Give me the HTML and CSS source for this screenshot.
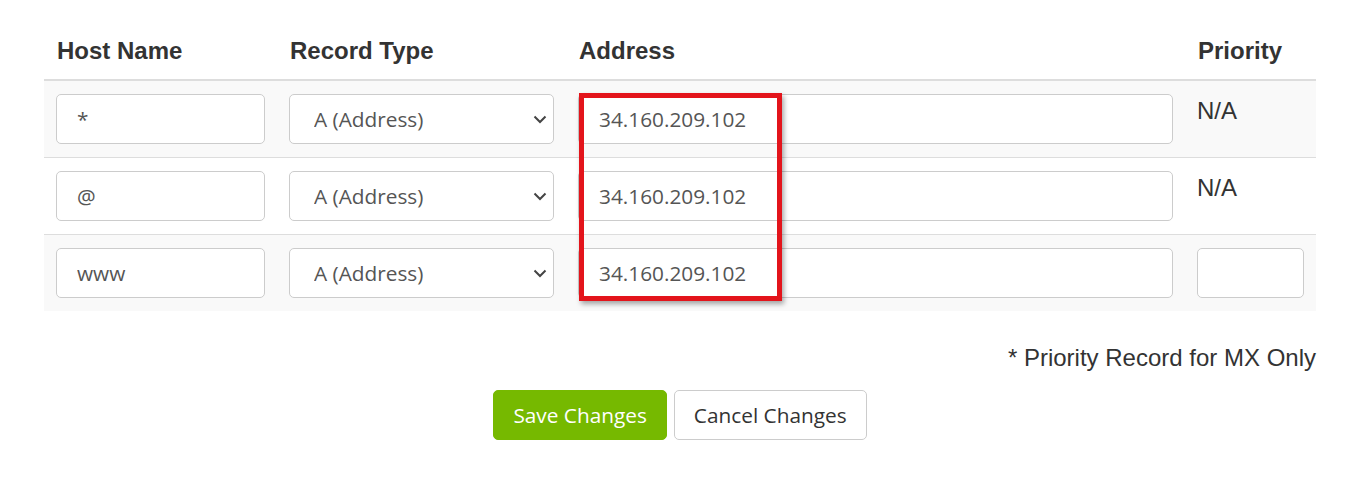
FILE: index.html
```html
<!DOCTYPE html>
<html lang="en">
<head>
<meta charset="utf-8">
<title>DNS Records</title>
<link rel="stylesheet" href="styles.css">
</head>
<body>
<div class="page">
  <table class="records">
    <colgroup>
      <col class="c-host">
      <col class="c-type">
      <col class="c-addr">
      <col class="c-prio">
    </colgroup>
    <thead>
      <tr>
        <th>Host Name</th>
        <th>Record Type</th>
        <th>Address</th>
        <th>Priority</th>
      </tr>
    </thead>
    <tbody>
      <tr>
        <td><input class="field" type="text" value="*"></td>
        <td>
          <span class="select-wrap">
            <select class="field select"><option>A (Address)</option></select>
            <svg class="chev" width="14" height="9" viewBox="0 0 14 9"><path d="M1.5 1.5 L7 7 L12.5 1.5" fill="none" stroke="#444" stroke-width="2"/></svg>
          </span>
        </td>
        <td><input class="field" type="text" value="34.160.209.102"></td>
        <td class="na">N/A</td>
      </tr>
      <tr>
        <td><input class="field" type="text" value="@"></td>
        <td>
          <span class="select-wrap">
            <select class="field select"><option>A (Address)</option></select>
            <svg class="chev" width="14" height="9" viewBox="0 0 14 9"><path d="M1.5 1.5 L7 7 L12.5 1.5" fill="none" stroke="#444" stroke-width="2"/></svg>
          </span>
        </td>
        <td><input class="field" type="text" value="34.160.209.102"></td>
        <td class="na">N/A</td>
      </tr>
      <tr>
        <td><input class="field" type="text" value="www"></td>
        <td>
          <span class="select-wrap">
            <select class="field select"><option>A (Address)</option></select>
            <svg class="chev" width="14" height="9" viewBox="0 0 14 9"><path d="M1.5 1.5 L7 7 L12.5 1.5" fill="none" stroke="#444" stroke-width="2"/></svg>
          </span>
        </td>
        <td><input class="field" type="text" value="34.160.209.102"></td>
        <td><input class="field" type="text" value=""></td>
      </tr>
    </tbody>
  </table>
  <p class="note">* Priority Record for MX Only</p>
  <div class="actions">
    <button class="btn btn-save" type="button">Save Changes</button>
    <button class="btn btn-cancel" type="button">Cancel Changes</button>
  </div>
  <div class="highlight"></div>
</div>
</body>
</html>
```
FILE: styles.css
```css
html, body {
  margin: 0;
  padding: 0;
  background: #fff;
}

.page {
  position: relative;
  padding: 22px 46px 0 44px;
  font-family: "Liberation Sans", Arial, sans-serif;
  color: #333;
}

.records {
  width: 1272px;
  border-collapse: collapse;
  table-layout: fixed;
}

.c-host { width: 233px; }
.c-type { width: 289px; }
.c-addr { width: 619px; }
.c-prio { width: 131px; }

.records th {
  text-align: left;
  font-weight: 700;
  font-size: 24px;
  line-height: 33.4px;
  padding: 12px 12px 12px 13px;
  border-bottom: 2px solid #ddd;
  color: #333;
}

.records td {
  padding: 13px 12px;
  vertical-align: top;
  border-top: 1px solid #ddd;
  font-size: 24px;
  line-height: 33.4px;
}

.records tbody tr:nth-child(odd) td {
  background: #f9f9f9;
}

.field {
  display: block;
  box-sizing: border-box;
  width: 100%;
  height: 50px;
  margin: 0;
  padding: 0 20px;
  border: 1px solid #ccc;
  border-radius: 5px;
  background: #fff;
  font-family: "Open Sans", sans-serif;
  font-size: 20.8px;
  color: #555;
  outline: none;
}

.select-wrap {
  position: relative;
  display: block;
}

.select {
  -webkit-appearance: none;
  appearance: none;
  padding: 0 40px 0 24px;
}

.chev {
  position: absolute;
  right: 7px;
  top: 50%;
  margin-top: -4px;
  pointer-events: none;
}

.na {
  color: #333;
}

.note {
  margin: 30px 0 0 0;
  text-align: right;
  font-size: 24px;
  line-height: 33.4px;
  color: #333;
}

.actions {
  display: flex;
  justify-content: center;
  gap: 7px;
  margin-top: 15px;
}

.btn {
  box-sizing: border-box;
  height: 50px;
  padding: 0 19px;
  border-radius: 5px;
  font-family: "Open Sans", sans-serif;
  font-size: 20.8px;
  cursor: pointer;
}

.btn-save {
  background: #76b900;
  border: 1px solid #76b900;
  color: #fff;
}

.btn-cancel {
  background: #fff;
  border: 1px solid #ccc;
  color: #333;
}

.highlight {
  position: absolute;
  left: 579px;
  top: 93px;
  width: 203px;
  height: 208px;
  box-sizing: border-box;
  border: 5px solid #e3141b;
  box-shadow: 2px 3px 5px rgba(0, 0, 0, 0.35);
  pointer-events: none;
}
```
